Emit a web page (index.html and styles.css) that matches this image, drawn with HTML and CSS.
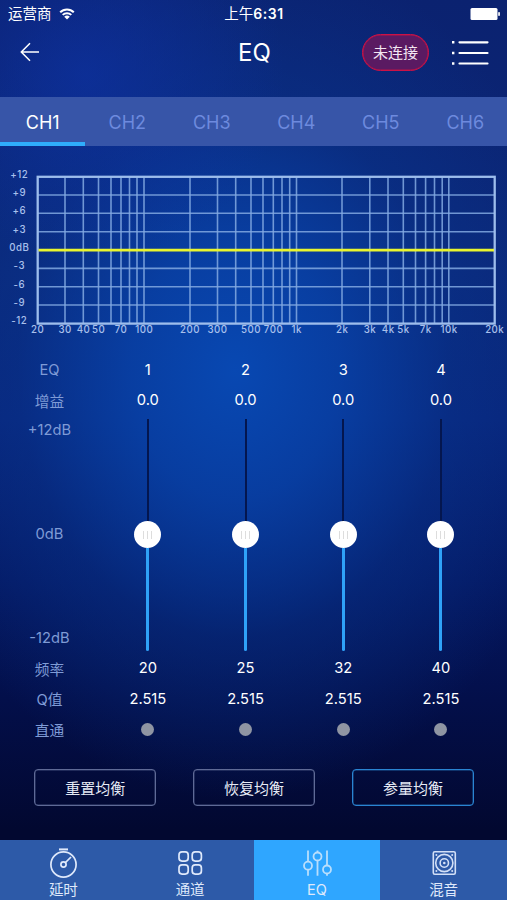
FILE: index.html
```html
<!DOCTYPE html>
<html lang="zh-CN">

<head>
    <meta charset="UTF-8">
    <meta name="viewport" content="width=device-width, initial-scale=1.0">
    <title>EQ</title>
    <link rel="stylesheet" href="styles.css">
</head>

<body>
    <div class="status">
        <div class="carrier">
            <span>运营商</span>
            <svg width="16" height="12" viewBox="0 0 16 12">
                <path d="M1.2 4.3a9.6 9.6 0 0 1 13.6 0M3.7 6.9a6.1 6.1 0 0 1 8.6 0" fill="none" stroke="#fff" stroke-width="2"/>
                <path d="M8 11.6L5.2 8.8a4 4 0 0 1 5.6 0z" fill="#fff"/>
            </svg>
        </div>
        <div class="time">上午<b>6:31</b></div>
        <div class="battery">
            <svg width="30" height="13" viewBox="0 0 30 13">
                <rect x="0.5" y="0" width="27" height="12" rx="1.5" fill="#fff"/>
                <rect x="28.2" y="4" width="1.7" height="4" rx="0.8" fill="#fff"/>
            </svg>
        </div>
    </div>

    <header class="header">
        <div class="back">
            <svg width="20" height="20" viewBox="0 0 20 20">
                <path d="M10 1.2L1.3 10l8.7 8.8M1.3 10H19" fill="none" stroke="#fff" stroke-width="1.5"/>
            </svg>
        </div>
        <h1>EQ</h1>
        <div class="tools">
            <button class="connect">未连接</button>
            <svg class="menu" width="38" height="26" viewBox="0 0 38 26">
                <path d="M8.5 2.3h28M8.5 13h28M8.5 23.5h28" stroke="#fff" stroke-width="2.2" stroke-linecap="round"/>
                <path d="M1 2.3h2.4M1 13h2.4M1 23.5h2.4" stroke="#fff" stroke-width="2.4"/>
            </svg>
        </div>
    </header>

    <nav class="channels">
        <a class="active">CH1</a>
        <a>CH2</a>
        <a>CH3</a>
        <a>CH4</a>
        <a>CH5</a>
        <a>CH6</a>
    </nav>

    <svg class="chart" width="507" height="194" viewBox="0 146 507 194">
        <!-- frequency lines -->
        <path class="grid" d="M65 177v146M83.3 177v146M98.5 177v146M111 177v146M121 177v146M129.5 177v146M137 177v146M144 177v146M190 177v146M217.5 177v146M235.7 177v146M251 177v146M263 177v146M273.3 177v146M282 177v146M289.7 177v146M296.5 177v146M342 177v146M369.8 177v146M388 177v146M403.3 177v146M415.5 177v146M425.6 177v146M434.5 177v146M442.2 177v146M448.8 177v146"/>
        <!-- gain lines -->
        <path class="grid" d="M38 195h457M38 213.3h457M38 231.7h457M38 268.4h457M38 286.7h457M38 305h457"/>
        <rect class="frame" x="37.7" y="176.8" width="457" height="146.8"/>
        <path class="curve" d="M38.5 250.1H494"/>
        <g class="db">
            <text x="19.3" y="177.7">+12</text>
            <text x="19.3" y="196">+9</text>
            <text x="19.3" y="214.3">+6</text>
            <text x="19.3" y="232.6">+3</text>
            <text x="19.3" y="251">0dB</text>
            <text x="19.3" y="269.3">-3</text>
            <text x="19.3" y="287.5">-6</text>
            <text x="19.3" y="305.8">-9</text>
            <text x="19.3" y="324.2">-12</text>
        </g>
        <g class="hz">
            <text x="37.7" y="333">20</text>
            <text x="65.2" y="333">30</text>
            <text x="83.5" y="333">40</text>
            <text x="98.7" y="333">50</text>
            <text x="121" y="333">70</text>
            <text x="144.2" y="333">100</text>
            <text x="189.9" y="333">200</text>
            <text x="217.5" y="333">300</text>
            <text x="251" y="333">500</text>
            <text x="273.5" y="333">700</text>
            <text x="296.7" y="333">1k</text>
            <text x="342.2" y="333">2k</text>
            <text x="370" y="333">3k</text>
            <text x="388.2" y="333">4k</text>
            <text x="403.5" y="333">5k</text>
            <text x="425.8" y="333">7k</text>
            <text x="449" y="333">10k</text>
            <text x="494.7" y="333">20k</text>
        </g>
    </svg>

    <main class="eq">
        <div class="col names">
            <span>EQ</span>
            <span>增益</span>
            <div class="scale">
                <span>+12dB</span>
                <span>0dB</span>
                <span>-12dB</span>
            </div>
            <span>频率</span>
            <span>Q值</span>
            <span>直通</span>
        </div>
        <div class="col">
            <span>1</span>
            <span>0.0</span>
            <div class="slider"><i class="rest"></i><i class="knob"></i><i class="fill"></i></div>
            <span>20</span>
            <span>2.515</span>
            <span><i class="dot"></i></span>
        </div>
        <div class="col">
            <span>2</span>
            <span>0.0</span>
            <div class="slider"><i class="rest"></i><i class="knob"></i><i class="fill"></i></div>
            <span>25</span>
            <span>2.515</span>
            <span><i class="dot"></i></span>
        </div>
        <div class="col">
            <span>3</span>
            <span>0.0</span>
            <div class="slider"><i class="rest"></i><i class="knob"></i><i class="fill"></i></div>
            <span>32</span>
            <span>2.515</span>
            <span><i class="dot"></i></span>
        </div>
        <div class="col">
            <span>4</span>
            <span>0.0</span>
            <div class="slider"><i class="rest"></i><i class="knob"></i><i class="fill"></i></div>
            <span>40</span>
            <span>2.515</span>
            <span><i class="dot"></i></span>
        </div>
    </main>

    <div class="buttons">
        <button>重置均衡</button>
        <button>恢复均衡</button>
        <button class="blue">参量均衡</button>
    </div>

    <footer class="tabbar">
        <a>
            <svg width="30" height="32" viewBox="0 0 30 32">
                <g fill="none" stroke="#dfe9fb" stroke-width="1.7">
                    <circle cx="15.5" cy="17.5" r="12.6"/>
                    <circle cx="15.5" cy="17.5" r="2.6"/>
                    <path d="M17.5 15.5l5.5-5.5"/>
                    <path d="M11 2.4h9" stroke-width="2"/>
                </g>
            </svg>
            <span>延时</span>
        </a>
        <a>
            <svg width="30" height="32" viewBox="0 0 30 32">
                <g fill="none" stroke="#dfe9fb" stroke-width="1.7">
                    <rect x="4" y="4.9" width="9.2" height="9.2" rx="3"/>
                    <rect x="17.2" y="4.9" width="9.2" height="9.2" rx="3"/>
                    <rect x="4" y="17.9" width="9.2" height="9.2" rx="3"/>
                    <rect x="17.2" y="17.9" width="9.2" height="9.2" rx="3"/>
                </g>
            </svg>
            <span>通道</span>
        </a>
        <a class="active">
            <svg width="30" height="32" viewBox="0 0 30 32">
                <g fill="none" stroke="#b9defc" stroke-width="1.8">
                    <path d="M6 3.5v11.2M6 22.7v6M15.5 3.5v2M15.5 13.5v15.2M25 3.5v15.2M25 26.5v2.2"/>
                    <circle cx="6" cy="18.7" r="4"/>
                    <circle cx="15.5" cy="9.5" r="4"/>
                    <circle cx="25" cy="22.5" r="4"/>
                </g>
            </svg>
            <span>EQ</span>
        </a>
        <a>
            <svg width="30" height="32" viewBox="0 0 30 32">
                <g fill="none" stroke="#d3e0f7" stroke-width="1.6">
                    <rect x="4.3" y="4.8" width="22" height="22.4" rx="1.5"/>
                    <circle cx="15.3" cy="16" r="8.6"/>
                    <circle cx="15.3" cy="16" r="4.2"/>
                </g>
                <g fill="#d3e0f7">
                    <circle cx="15.3" cy="16" r="1.3"/>
                    <circle cx="7.4" cy="8" r="1"/>
                    <circle cx="23.2" cy="8" r="1"/>
                    <circle cx="7.4" cy="24" r="1"/>
                    <circle cx="23.2" cy="24" r="1"/>
                </g>
            </svg>
            <span>混音</span>
        </a>
    </footer>
</body>

</html>
```

FILE: styles.css
```css
* {
    box-sizing: border-box;
}

body {
    margin: 0;
    width: 507px;
    height: 900px;
    overflow: hidden;
    display: flex;
    flex-direction: column;
    color: #fff;
    font-family: Inter, "Noto Sans CJK SC", sans-serif;
    background:
        radial-gradient(ellipse 200px 190px at 85px 75px, rgba(14, 50, 165, 0.65), transparent),
        radial-gradient(ellipse 350px 430px at 235px 370px, #0848b2 0%, rgba(8, 66, 168, 0.85) 30%, rgba(8, 54, 144, 0.45) 62%, transparent 100%),
        linear-gradient(#0b2270 0, #0b2778 270px, #08247a 420px, #041862 580px, #030f4a 700px, #020830 830px);
}

button {
    font-family: inherit;
    padding: 0;
    background: none;
    color: #fff;
}

/* status bar */
.status {
    height: 28px;
    display: grid;
    grid-template-columns: 1fr auto 1fr;
    align-items: center;
    padding: 0 7px 0 8px;
    font-size: 14.5px;
    line-height: 28px;
}

.carrier {
    display: flex;
    align-items: center;
    gap: 7px;
}

.time b {
    font-weight: 600;
    font-size: 14px;
    letter-spacing: 0.6px;
}

.battery {
    display: flex;
    justify-content: flex-end;
}

/* header */
.header {
    height: 69px;
    padding: 0 18px 20px 20px;
    display: grid;
    grid-template-columns: 1fr auto 1fr;
    align-items: center;
}

.back,
.tools {
    display: flex;
    align-items: center;
}

.back {
    padding-bottom: 2px;
}

.header h1 {
    margin: 0;
    font-size: 24px;
    line-height: 30px;
    font-weight: 400;
}

.tools {
    justify-content: flex-end;
    gap: 22px;
}

.connect {
    width: 67px;
    height: 37px;
    padding-bottom: 2px;
    border: 1px solid #cc1246;
    border-radius: 19px;
    box-shadow: inset 0 0 0 0.5px #b51348;
    background: #5a1a62;
    color: #f3e6f2;
    font-size: 15px;
}

/* channel tabs */
.channels {
    height: 49px;
    display: grid;
    grid-template-columns: repeat(6, 1fr);
    background: #3755a8;
}

.channels a {
    padding: 2px 0 0 1px;
    border-bottom: 4px solid transparent;
    color: #6d8ade;
    font-size: 18px;
    line-height: 47px;
    text-align: center;
    height: 49px;
}

.channels .active {
    color: #fff;
    border-color: #2fadfb;
}

/* response chart */
.chart {
    flex: none;
    display: block;
}

.grid {
    fill: none;
    stroke: #83a9e2;
    stroke-opacity: 0.85;
    stroke-width: 1.6;
}

.frame {
    fill: none;
    stroke: #9dbdec;
    stroke-width: 2.3;
}

.curve {
    stroke: #eaf52e;
    stroke-width: 2.6;
}

.chart text {
    fill: #a9c0ec;
    font-size: 9.7px;
    font-weight: 500;
    letter-spacing: 0.5px;
    text-anchor: middle;
}

/* bands */
.eq {
    display: grid;
    grid-template-columns: 99px repeat(4, 97.7px);
    padding-top: 15px;
    height: 405px;
    font-size: 14.7px;
}

.col {
    display: flex;
    flex-direction: column;
}

.col span {
    display: flex;
    justify-content: center;
    align-items: center;
    height: 30.4px;
    padding-bottom: 1px;
}

.names {
    color: #7f9bd6;
}

.scale {
    height: 238px;
    display: flex;
    flex-direction: column;
    justify-content: space-between;
}

.slider {
    height: 238px;
    padding: 3px 0;
    display: flex;
    flex-direction: column;
    align-items: center;
}

.rest {
    width: 2px;
    flex: 1;
    background: #04164f;
}

.fill {
    width: 3px;
    flex: 1;
    border-radius: 0 0 2px 2px;
    background: #2fa2f8;
}

.knob {
    width: 27px;
    height: 27px;
    border-radius: 50%;
    background:
        linear-gradient(90deg, #ddd 1px, transparent 1px 4px, #ddd 4px 5px, transparent 5px 8px, #ddd 8px) center / 9px 8px no-repeat,
        #fff;
}

.dot {
    width: 13px;
    height: 13px;
    border-radius: 50%;
    background: #8f95a3;
}

.buttons {
    display: flex;
    gap: 36.5px;
    padding: 24px 0 34px 34px;
}

.buttons button {
    width: 122.4px;
    height: 37px;
    padding-bottom: 1px;
    border: 1px solid #5f6a96;
    border-radius: 4px;
    box-shadow: inset 0 0 0 0.5px #3f4a78;
    font-size: 15px;
    color: #e6eaf5;
}

.buttons .blue {
    border-color: #2a84d2;
    box-shadow: inset 0 0 0 0.5px #1c5c9c;
}

/* bottom tabs */
.tabbar {
    height: 60px;
    margin-top: auto;
    display: grid;
    grid-template-columns: repeat(4, 1fr);
    background: #2d5aa8;
}

.tabbar a {
    display: flex;
    flex-direction: column;
    align-items: center;
    padding-top: 7px;
    font-size: 14.5px;
    line-height: 22px;
    color: #dfe9fb;
}

.tabbar svg {
    flex: none;
}

.tabbar .active {
    background: #2fa6ff;
}
```
